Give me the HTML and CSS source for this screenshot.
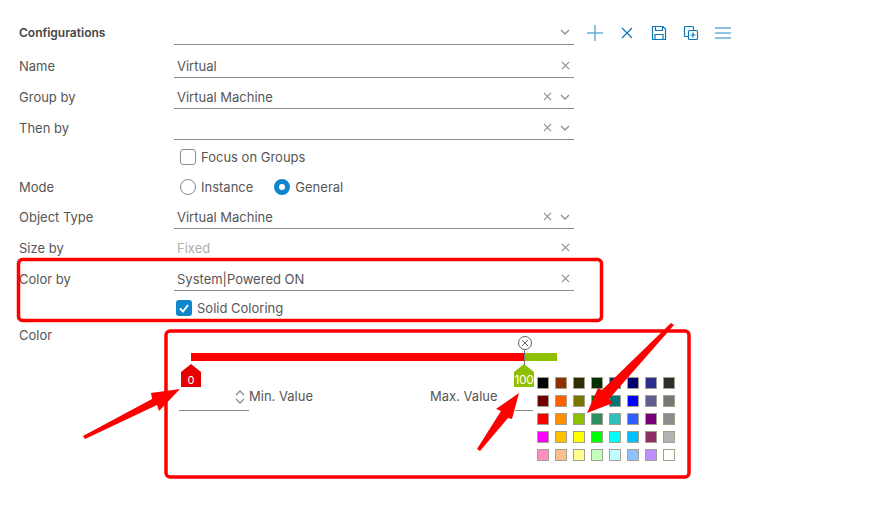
FILE: index.html
```html
<!DOCTYPE html>
<html lang="en">
<head>
  <meta charset="UTF-8" />
  <title>Configurations</title>
  <link rel="stylesheet" href="styles.css">
</head>
<body>
  <form class="config-form">
    <div class="row row-config">
      <div class="row-label title">Configurations</div>
      <div class="field">
        <span class="field-value"></span>
        <svg class="ico-chev" viewBox="0 0 10 6"><path d="M1 1l4 4 4-4"/></svg>
      </div>
      <div class="toolbar">
        <svg class="tool light" viewBox="0 0 18 18"><path d="M9 1v16M1 9h16"/></svg>
        <svg class="tool" viewBox="0 0 18 18"><path d="M4 4l10 10M14 4L4 14"/></svg>
        <svg class="tool" viewBox="0 0 18 18"><path d="M2.500 2.500h10.500l2.500 2.500v10.500h-13zM5.500 2.500v4h7v-4M5 15.500v-5h8v5"/></svg>
        <svg class="tool" viewBox="0 0 18 18"><path d="M6 12.500H3.500q-1 0-1-1v-8q0-1 1-1h7q1 0 1 1V6M7.500 6.500h7q1 0 1 1v7q0 1-1 1h-7q-1 0-1-1v-7q0-1 1-1zM11 8.500v5M8.500 11h5"/></svg>
        <svg class="tool light" viewBox="0 0 18 18"><path d="M1 4h16M1 9h16M1 14h16"/></svg>
      </div>
    </div>

    <div class="row row-name">
      <label class="row-label">Name</label>
      <div class="field">
        <span class="field-value">Virtual</span>
        <svg class="ico-x" viewBox="0 0 10 10"><path d="M1 1l8 8M9 1L1 9"/></svg>
      </div>
    </div>

    <div class="row">
      <label class="row-label">Group by</label>
      <div class="field">
        <span class="field-value">Virtual Machine</span>
        <svg class="ico-x" viewBox="0 0 10 10"><path d="M1 1l8 8M9 1L1 9"/></svg>
        <svg class="ico-chev" viewBox="0 0 10 6"><path d="M1 1l4 4 4-4"/></svg>
      </div>
    </div>

    <div class="row">
      <label class="row-label">Then by</label>
      <div class="field">
        <span class="field-value"></span>
        <svg class="ico-x" viewBox="0 0 10 10"><path d="M1 1l8 8M9 1L1 9"/></svg>
        <svg class="ico-chev" viewBox="0 0 10 6"><path d="M1 1l4 4 4-4"/></svg>
      </div>
    </div>

    <div class="row row-focus">
      <div class="row-label"></div>
      <span class="checkbox"></span>
      <span class="option-text">Focus on Groups</span>
    </div>

    <div class="row row-mode">
      <label class="row-label">Mode</label>
      <span class="radio"></span>
      <span class="option-text radio-text">Instance</span>
      <span class="radio radio-on"></span>
      <span class="option-text">General</span>
    </div>

    <div class="row row-object">
      <label class="row-label">Object Type</label>
      <div class="field">
        <span class="field-value">Virtual Machine</span>
        <svg class="ico-x" viewBox="0 0 10 10"><path d="M1 1l8 8M9 1L1 9"/></svg>
        <svg class="ico-chev" viewBox="0 0 10 6"><path d="M1 1l4 4 4-4"/></svg>
      </div>
    </div>

    <div class="row">
      <label class="row-label">Size by</label>
      <div class="field">
        <span class="field-value muted">Fixed</span>
        <svg class="ico-x" viewBox="0 0 10 10"><path d="M1 1l8 8M9 1L1 9"/></svg>
      </div>
    </div>

    <div class="row">
      <label class="row-label">Color by</label>
      <div class="field">
        <span class="field-value">System|Powered ON</span>
        <svg class="ico-x" viewBox="0 0 10 10"><path d="M1 1l8 8M9 1L1 9"/></svg>
      </div>
    </div>

    <div class="row row-solid">
      <div class="row-label"></div>
      <span class="checkbox checkbox-on">
        <svg viewBox="0 0 16 16"><path d="M4 8.500l3 3 5-6.500"/></svg>
      </span>
      <span class="option-text">Solid Coloring</span>
    </div>

    <div class="row row-color">
      <label class="row-label">Color</label>
      <div class="color-panel">
        <div class="slider">
          <div class="slider-red"></div>
          <div class="slider-green"></div>
          <div class="handle handle-min">0</div>
          <div class="handle handle-max">100</div>
          <div class="handle-line"></div>
          <div class="handle-close">
            <svg viewBox="0 0 10 10"><path d="M2 2l6 6M8 2L2 8"/></svg>
          </div>
        </div>
        <div class="values">
          <div class="number-input">
            <svg class="stepper" viewBox="0 0 10 14"><path d="M1 5l4-4 4 4M1 9l4 4 4-4"/></svg>
          </div>
          <span class="value-label">Min. Value</span>
          <span class="value-label max-label">Max. Value</span>
          <div class="number-input max-input"></div>
          <div class="swatches" id="swatches"></div>
        </div>
      </div>
    </div>
  </form>

  <svg class="marks" viewBox="0 0 888 526">
    <rect class="mark-box" x="18.500" y="259.500" width="583" height="61" rx="4"/>
    <rect class="mark-box" x="166" y="331" width="523" height="146" rx="4"/>
    <polygon points="83,436 152,399 151,393 180,389 159,411 157,405 85,439"/>
    <polygon points="477,449 501,411 496,409 519,393 512,419 508,418 480,451"/>
    <polygon points="671,323 602,390 598,388 587,413 613,403 609,399 674,325"/>
  </svg>

  <script>
    const colors = [
      '#000000', '#8f3000', '#2e2e00', '#003000', '#003060', '#000070', '#2e2e8f', '#2e2e2e',
      '#700000', '#ff6000', '#787800', '#007800', '#007878', '#0000ff', '#5e5e8f', '#787878',
      '#ff0000', '#ff8f00', '#8fc000', '#2e8f60', '#2ec0c0', '#2e60ff', '#780078', '#8c8c8c',
      '#ff00ff', '#ffc000', '#ffff00', '#00ff00', '#00ffff', '#00c0ff', '#8f2e60', '#b4b4b4',
      '#ff8fc0', '#ffc08f', '#ffff8f', '#c0ffc0', '#c0ffff', '#8fc0ff', '#c08fff', '#ffffff'
    ];
    const box = document.getElementById('swatches');
    colors.forEach((c) => {
      const s = document.createElement('span');
      s.className = 'swatch';
      s.style.background = c;
      box.appendChild(s);
    });
  </script>
</body>
</html>
```
FILE: styles.css
```css
body {
  margin: 0;
  background: #fff;
  font-family: Inter, "Open Sans", sans-serif;
  font-size: 13px;
  color: #565656;
  overflow: hidden;
}

.config-form {
  padding: 21px 0 0 19px;
}

.row {
  display: flex;
  align-items: flex-end;
  height: 31px;
}

.row-label {
  width: 155px;
  flex: none;
  height: 22px;
  line-height: 20px;
}

.title {
  font-size: 12px;
  font-weight: 600;
  color: #454545;
  height: 24px;
  line-height: 24px;
}

.field {
  width: 400px;
  height: 23px;
  box-sizing: border-box;
  border-bottom: 1px solid #8c8c8c;
  display: flex;
  align-items: center;
  justify-content: flex-end;
  gap: 8px;
  padding: 0 4px 1px 3px;
}

.field-value {
  flex: 1;
  padding-top: 1px;
  line-height: 20px;
}

.muted {
  color: #b0b0b0;
}

.row-config {
  height: 24px;
}

.row-config .field {
  padding-bottom: 3px;
}

.row-name {
  height: 33px;
}

.ico-x {
  width: 9px;
  height: 9px;
  flex: none;
}

.ico-chev {
  width: 10px;
  height: 6px;
  flex: none;
}

.ico-x path, .ico-chev path, .stepper path {
  fill: none;
  stroke: #8f8f8f;
  stroke-width: 1.300;
}

.toolbar {
  display: flex;
  gap: 14px;
  align-self: flex-start;
  padding: 3px 0 0 12px;
}

.tool {
  width: 18px;
  height: 18px;
}

.tool path {
  fill: none;
  stroke: #0f77b8;
  stroke-width: 1.200;
}

.tool.light path {
  stroke: #6aaedb;
  stroke-width: 1.500;
}

.row-focus {
  height: 32px;
  box-sizing: border-box;
  padding-top: 2px;
  align-items: center;
}

.row-focus .row-label,
.row-solid .row-label {
  height: auto;
}

.checkbox {
  width: 16px;
  height: 16px;
  box-sizing: border-box;
  border: 1px solid #8c8c8c;
  border-radius: 3px;
  margin: 0 5px 0 6px;
  flex: none;
}

.checkbox-on {
  background: #0f85cc;
  border: 0;
  margin-left: 2px;
}

.checkbox-on svg {
  display: block;
  width: 16px;
  height: 16px;
}

.checkbox-on path {
  fill: none;
  stroke: #fff;
  stroke-width: 2;
}

.option-text {
  line-height: 18px;
}

.row-mode {
  height: 30px;
  align-items: center;
}

.row-mode .row-label {
  line-height: 18px;
  height: 18px;
}

.radio {
  width: 16px;
  height: 16px;
  box-sizing: border-box;
  border: 1px solid #8c8c8c;
  border-radius: 50%;
  margin: 0 5px 0 6px;
  flex: none;
}

.radio-on {
  border: 5.500px solid #0f85cc;
}

.radio-text {
  margin-right: 15px;
}

.row-object {
  height: 27px;
}

.row-solid {
  height: 31px;
  box-sizing: border-box;
  padding-top: 2px;
  align-items: center;
}

.row-color {
  height: auto;
  align-items: flex-start;
  margin-top: 3px;
}

.color-panel {
  padding-top: 28px;
}

.slider {
  position: relative;
  display: flex;
  height: 8px;
  margin: 0 0 16px 17px;
  width: 366px;
}

.slider-red {
  width: 334px;
  background: #ff0000;
}

.slider-green {
  width: 32px;
  background: #8fc000;
}

.handle {
  position: absolute;
  top: 11px;
  width: 20px;
  height: 23px;
  box-sizing: border-box;
  padding-top: 9px;
  clip-path: polygon(50% 0, 100% 35%, 100% 100%, 0 100%, 0 35%);
  color: #fff;
  font-size: 11px;
  line-height: 14px;
  text-align: center;
}

.handle-min {
  left: -10px;
  background: #e60000;
}

.handle-max {
  left: 323px;
  background: #8fc000;
  font-size: 12px;
  letter-spacing: -0.300px;
}

.handle-line {
  position: absolute;
  left: 333px;
  top: -3px;
  width: 1px;
  height: 15px;
  background: #777;
}

.handle-close {
  position: absolute;
  left: 327px;
  top: -17px;
  width: 14px;
  height: 14px;
  box-sizing: border-box;
  border: 1px solid #666;
  border-radius: 50%;
  background: #fff;
  display: flex;
  align-items: center;
  justify-content: center;
}

.handle-close svg {
  width: 10px;
  height: 10px;
}

.handle-close path {
  fill: none;
  stroke: #666;
  stroke-width: 1;
}

.values {
  display: flex;
  align-items: flex-start;
}

.number-input {
  width: 70px;
  height: 34px;
  box-sizing: border-box;
  border-bottom: 1px solid #8c8c8c;
  margin-left: 5px;
  display: flex;
  justify-content: flex-end;
  padding: 13px 4px 0 0;
  flex: none;
}

.stepper {
  width: 10px;
  height: 14px;
}

.value-label {
  line-height: 18px;
  margin-top: 10px;
}

.max-label {
  margin-left: 117px;
}

.max-input {
  width: 18px;
  margin-left: 17px;
}

.swatches {
  display: grid;
  grid-template-columns: repeat(8, 12px);
  grid-auto-rows: 12px;
  gap: 6px;
  margin-left: 4px;
}

.swatch {
  box-sizing: border-box;
  border: 1px solid #a39f8f;
}

.marks {
  position: absolute;
  left: 0;
  top: 0;
  width: 888px;
  height: 526px;
  pointer-events: none;
}

.marks polygon {
  fill: #ff0000;
}

.mark-box {
  fill: none;
  stroke: #ff0000;
  stroke-width: 3.500;
}
```
